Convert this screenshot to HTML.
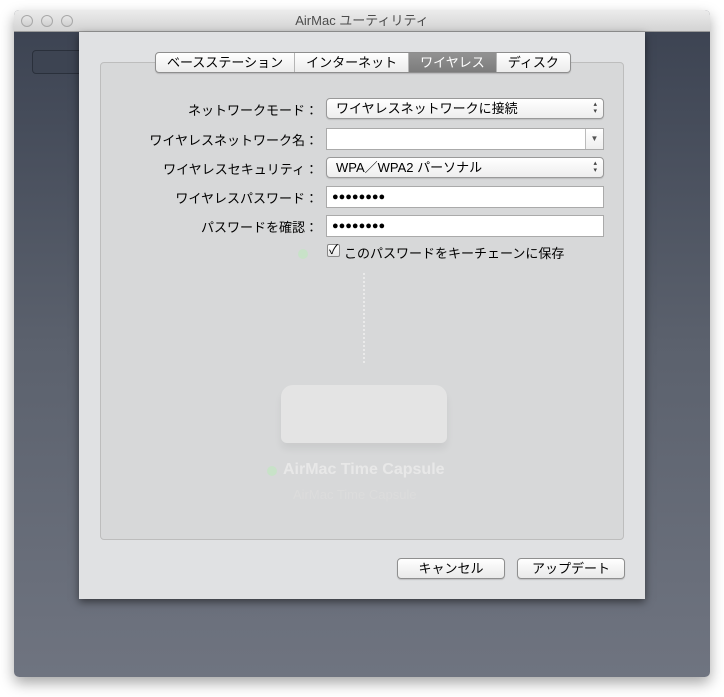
<!DOCTYPE html>
<html><head><meta charset="utf-8"><style>
*{box-sizing:border-box;margin:0;padding:0}
body{width:724px;height:697px;background:#fff;position:relative;overflow:hidden;font-family:"Liberation Sans","Noto Sans CJK JP",sans-serif;font-size:13px;color:#000}
.win{position:absolute;left:14px;top:10px;width:696px;height:667px;border-radius:5px;overflow:hidden;box-shadow:0 6px 14px rgba(0,0,0,.35);background:linear-gradient(#3b4251,#5b616d 50%,#6f7480)}
.title{position:absolute;left:0;top:0;width:100%;height:22px;background:linear-gradient(#ececec,#d3d3d3);border-bottom:1px solid #9a9a9a;text-align:center;line-height:22px;color:#4d4d4d;font-size:13px}
.tl{position:absolute;top:5px;width:12px;height:12px;border-radius:50%;border:1px solid #a8a8a8;background:linear-gradient(#e8e8e8,#cfcfcf)}
.lb{position:absolute;left:18px;top:40px;width:60px;height:24px;border-radius:4px;background:#3d4452;border:1px solid #2a303b}
.sheet{position:absolute;left:79px;top:32px;width:566px;height:567px;background:#e0e1e3;box-shadow:0 3px 8px rgba(0,0,0,.5)}
.grp{position:absolute;left:21px;top:30px;width:524px;height:478px;background:#d7d8d9;border:1px solid #bdbdbd;border-radius:4px}
.tabs{position:absolute;left:76px;top:20px;height:21px;display:flex;border:1px solid #8e8e8e;border-radius:4px;overflow:hidden;background:linear-gradient(#fff,#ececec);box-shadow:0 1px 1px rgba(0,0,0,.15)}
.tabs div{height:19px;line-height:19px;padding:0 11px;font-size:13px;border-right:1px solid #b5b5b5}
.tabs div:last-child{border-right:0}
.tabs .sel{background:linear-gradient(#929292,#7c7c7c);color:#fff}
.lab{position:absolute;right:327px;font-size:13px;text-align:right;white-space:nowrap}
.pop{position:absolute;left:247px;width:278px;height:21px;border:1px solid #999;border-radius:4px;background:linear-gradient(#fff,#eee);padding-left:9px;line-height:19px;box-shadow:0 1px 1px rgba(0,0,0,.12)}
.pop:after{content:"▴\A▾";white-space:pre;position:absolute;right:6px;top:2px;font-size:7px;line-height:7px;color:#444}
.fld{position:absolute;left:247px;width:278px;height:22px;border:1px solid #aaa;background:#fff;padding-left:5px;line-height:20px;font-size:11px;letter-spacing:0px}
.btn{position:absolute;top:526px;width:108px;height:21px;border:1px solid #8f8f8f;border-radius:4px;background:linear-gradient(#fff,#e9e9e9);text-align:center;line-height:19px;box-shadow:0 1px 1px rgba(0,0,0,.15)}
</style></head><body>
<div class="win">
<div class="title">AirMac ユーティリティ
<div class="tl" style="left:7px"></div><div class="tl" style="left:27px"></div><div class="tl" style="left:47px"></div></div>
<div class="lb"></div>
</div>
<div class="sheet">
<div class="grp">
 <div style="position:absolute;left:262px;top:210px;height:90px;border-left:2px dotted #eaeaea"></div>
 <div style="position:absolute;left:197px;top:186px;width:10px;height:10px;border-radius:50%;background:#c8e2c8"></div>
 <div style="position:absolute;left:180px;top:322px;width:166px;height:58px;border-radius:12px 12px 6px 6px;background:#e4e4e4;box-shadow:0 6px 8px rgba(0,0,0,.06)"></div>
 <div style="position:absolute;left:166px;top:403px;width:10px;height:10px;border-radius:50%;background:#c8e2c8"></div>
 <div style="position:absolute;left:182px;top:398px;font-weight:bold;font-size:16px;color:#e8e8e8">AirMac Time Capsule</div>
 <div style="position:absolute;left:192px;top:424px;font-size:13px;color:#dcdcdc">AirMac Time Capsule</div>
</div>
<div class="tabs"><div>ベースステーション</div><div>インターネット</div><div class="sel">ワイヤレス</div><div>ディスク</div></div>
<div class="lab" style="top:68px">ネットワークモード：</div>
<div class="pop" style="top:66px">ワイヤレスネットワークに接続</div>
<div class="lab" style="top:98px">ワイヤレスネットワーク名：</div>
<div class="fld" style="top:96px;width:278px"><span style="position:absolute;right:0;top:0;width:18px;height:20px;border-left:1px solid #bbb;background:linear-gradient(#fff,#eee);font-size:8px;text-align:center;color:#555">▼</span></div>
<div class="lab" style="top:127px">ワイヤレスセキュリティ：</div>
<div class="pop" style="top:125px">WPA／WPA2 パーソナル</div>
<div class="lab" style="top:156px">ワイヤレスパスワード：</div>
<div class="fld" style="top:154px">●●●●●●●●</div>
<div class="lab" style="top:185px">パスワードを確認：</div>
<div class="fld" style="top:183px">●●●●●●●●</div>
<div style="position:absolute;left:248px;top:212px;width:13px;height:13px;border:1px solid #888;border-radius:2px;background:linear-gradient(#fff,#e6e6e6);font-size:13px;line-height:10px;text-align:center">✓</div>
<div style="position:absolute;left:265px;top:211px">このパスワードをキーチェーンに保存</div>
<div class="btn" style="left:318px">キャンセル</div>
<div class="btn" style="left:438px">アップデート</div>
</div>
</body></html>
